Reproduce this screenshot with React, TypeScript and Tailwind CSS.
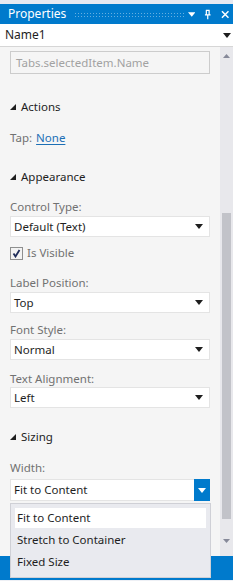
import React from 'react';

const font = { fontFamily: '"Noto Sans", "Open Sans", sans-serif' };

const Caret: React.FC<{ className?: string }> = ({ className }) => (
  <svg width="8" height="5" viewBox="0 0 8 5" className={className}>
    <path d="M0 0H8L4 5Z" fill="currentColor" />
  </svg>
);

const SectionHeader: React.FC<{ title: string; className?: string }> = ({ title, className }) => (
  <div className={`flex items-center h-[14px] pl-[10px] ${className ?? ''}`}>
    <svg width="6" height="6" viewBox="0 0 6 6" className="mr-[5px] text-[#1e1e1e]">
      <path d="M6 0V6H0Z" fill="currentColor" />
    </svg>
    <span className="text-[11.5px] text-[#1e1e1e] leading-none">{title}</span>
  </div>
);

const FieldLabel: React.FC<{ text: string; className?: string }> = ({ text, className }) => (
  <div className={`h-[14px] pl-[10px] text-[11.5px] text-[#717171] leading-[14px] ${className ?? ''}`}>{text}</div>
);

const Select: React.FC<{ value: string; className?: string; open?: boolean }> = ({ value, className, open }) => (
  <div
    className={`mx-[10px] w-[200px] h-[21px] bg-white border border-[#e4e4e4] flex items-center justify-between ${className ?? ''}`}
  >
    <span className="pl-[3px] text-[11.5px] text-[#1e1e1e] leading-none">{value}</span>
    {open ? (
      <div className="w-[16px] h-[22px] -mr-px bg-[#007acc] flex items-center justify-center">
        <Caret className="text-white" />
      </div>
    ) : (
      <Caret className="mr-[6px] text-[#1e1e1e]" />
    )}
  </div>
);

export default function App() {
  return (
    <div className="relative w-[233px] h-[581px] overflow-hidden bg-[#eef0f5] select-none" style={font}>
      <div className="h-[4px] bg-[#e6e9f1]" />
      {/* title bar */}
      <div className="h-[20px] bg-[#007acc] flex items-center pl-[8px] pr-[4px]">
        <span className="text-white text-[12px] leading-none">Properties</span>
        <div
          className="ml-[8px] w-[118px] h-[5px]"
          style={{
            backgroundImage: 'radial-gradient(circle, rgba(255,255,255,0.4) 0.6px, transparent 0.8px)',
            backgroundSize: '3px 3px',
          }}
        />
        <Caret className="ml-[3px] text-white" />
        <svg width="8" height="11" viewBox="0 0 8 11" className="ml-[9px] text-white">
          <path d="M2 1H6M2.5 1V6M5.5 1V6M1 6H7M4 6V10.5" stroke="currentColor" strokeWidth="1.3" fill="none" />
        </svg>
        <svg width="9" height="9" viewBox="0 0 9 9" className="ml-[9px] text-white">
          <path d="M1 1L8 8M8 1L1 8" stroke="currentColor" strokeWidth="1.6" />
        </svg>
      </div>
      {/* object selector */}
      <div className="h-[23px] bg-white border-b border-[#d6d6d6] flex items-center justify-between pl-[5px] pr-[2px]">
        <span className="text-[12px] text-[#1e1e1e] leading-none">Name1</span>
        <Caret className="text-[#1e1e1e]" />
      </div>
      {/* body */}
      <div className="flex h-[509px]">
        <div className="flex-1 bg-[#f5f5f5] flex flex-col">
          <div className="mt-[4px] mx-[10px] w-[200px] h-[23px] border border-[#cccccc] flex items-center pl-[5px]">
            <span className="text-[11.5px] text-[#a2a2a2] leading-none">Tabs.selectedItem.Name</span>
          </div>
          <SectionHeader title="Actions" className="mt-[26px]" />
          <div className="mt-[17px] h-[14px] pl-[10px] flex items-center text-[11.5px] leading-none">
            <span className="text-[#717171]">Tap:</span>
            <span className="ml-[4px] text-[#1c6fb5] underline underline-offset-2">None</span>
          </div>
          <SectionHeader title="Appearance" className="mt-[25px]" />
          <FieldLabel text="Control Type:" className="mt-[16px]" />
          <Select value="Default (Text)" className="mt-[2px]" />
          <div className="mt-[9px] h-[14px] pl-[10px] flex items-center">
            <div className="w-[13px] h-[13px] border border-[#8e8f8f] bg-[#f3f3f3] flex items-center justify-center">
              <svg width="9" height="9" viewBox="0 0 9 9">
                <path d="M1.5 4.5L3.5 7.5L7.5 1" stroke="#1f2d5a" strokeWidth="1.8" fill="none" />
              </svg>
            </div>
            <span className="ml-[4px] text-[11.5px] text-[#717171] leading-none">Is Visible</span>
          </div>
          <FieldLabel text="Label Position:" className="mt-[16px]" />
          <Select value="Top" className="mt-[2px]" />
          <FieldLabel text="Font Style:" className="mt-[10px]" />
          <Select value="Normal" className="mt-[2px]" />
          <FieldLabel text="Text Alignment:" className="mt-[12px]" />
          <Select value="Left" className="mt-[1px]" />
          <SectionHeader title="Sizing" className="mt-[22px]" />
          <FieldLabel text="Width:" className="mt-[17px]" />
          <Select value="Fit to Content" className="mt-[4px] h-[22px]" open />
        </div>
        {/* scrollbar */}
        <div className="w-[15px] bg-[#e8e8ec] flex flex-col items-center">
          <svg width="7" height="4" viewBox="0 0 7 4" className="mt-[7px] text-[#868999]">
            <path d="M0 4H7L3.5 0Z" fill="currentColor" />
          </svg>
          <div className="mt-[155px] w-[9px] h-[306px] bg-[#c2c3c9]" />
          <svg width="7" height="4" viewBox="0 0 7 4" className="mt-[20px] text-[#868999]">
            <path d="M0 0H7L3.5 4Z" fill="currentColor" />
          </svg>
        </div>
      </div>
      {/* status bar */}
      <div className="h-[24px] bg-[#007acc]" />
      {/* dropdown list */}
      <div className="absolute left-[10px] top-[503px] w-[201px] h-[75px] bg-[#e9eaef] border border-[#cfd0d6] px-[4px] pt-[4px]">
        <div className="h-[20px] bg-white flex items-center pl-[2px] text-[11.5px] text-[#1e1e1e] leading-none">
          Fit to Content
        </div>
        <div className="h-[23px] flex items-center pl-[2px] text-[11.5px] text-[#1e1e1e] leading-none">
          Stretch to Container
        </div>
        <div className="h-[22px] flex items-center pl-[2px] text-[11.5px] text-[#1e1e1e] leading-none">
          Fixed Size
        </div>
      </div>
    </div>
  );
}
